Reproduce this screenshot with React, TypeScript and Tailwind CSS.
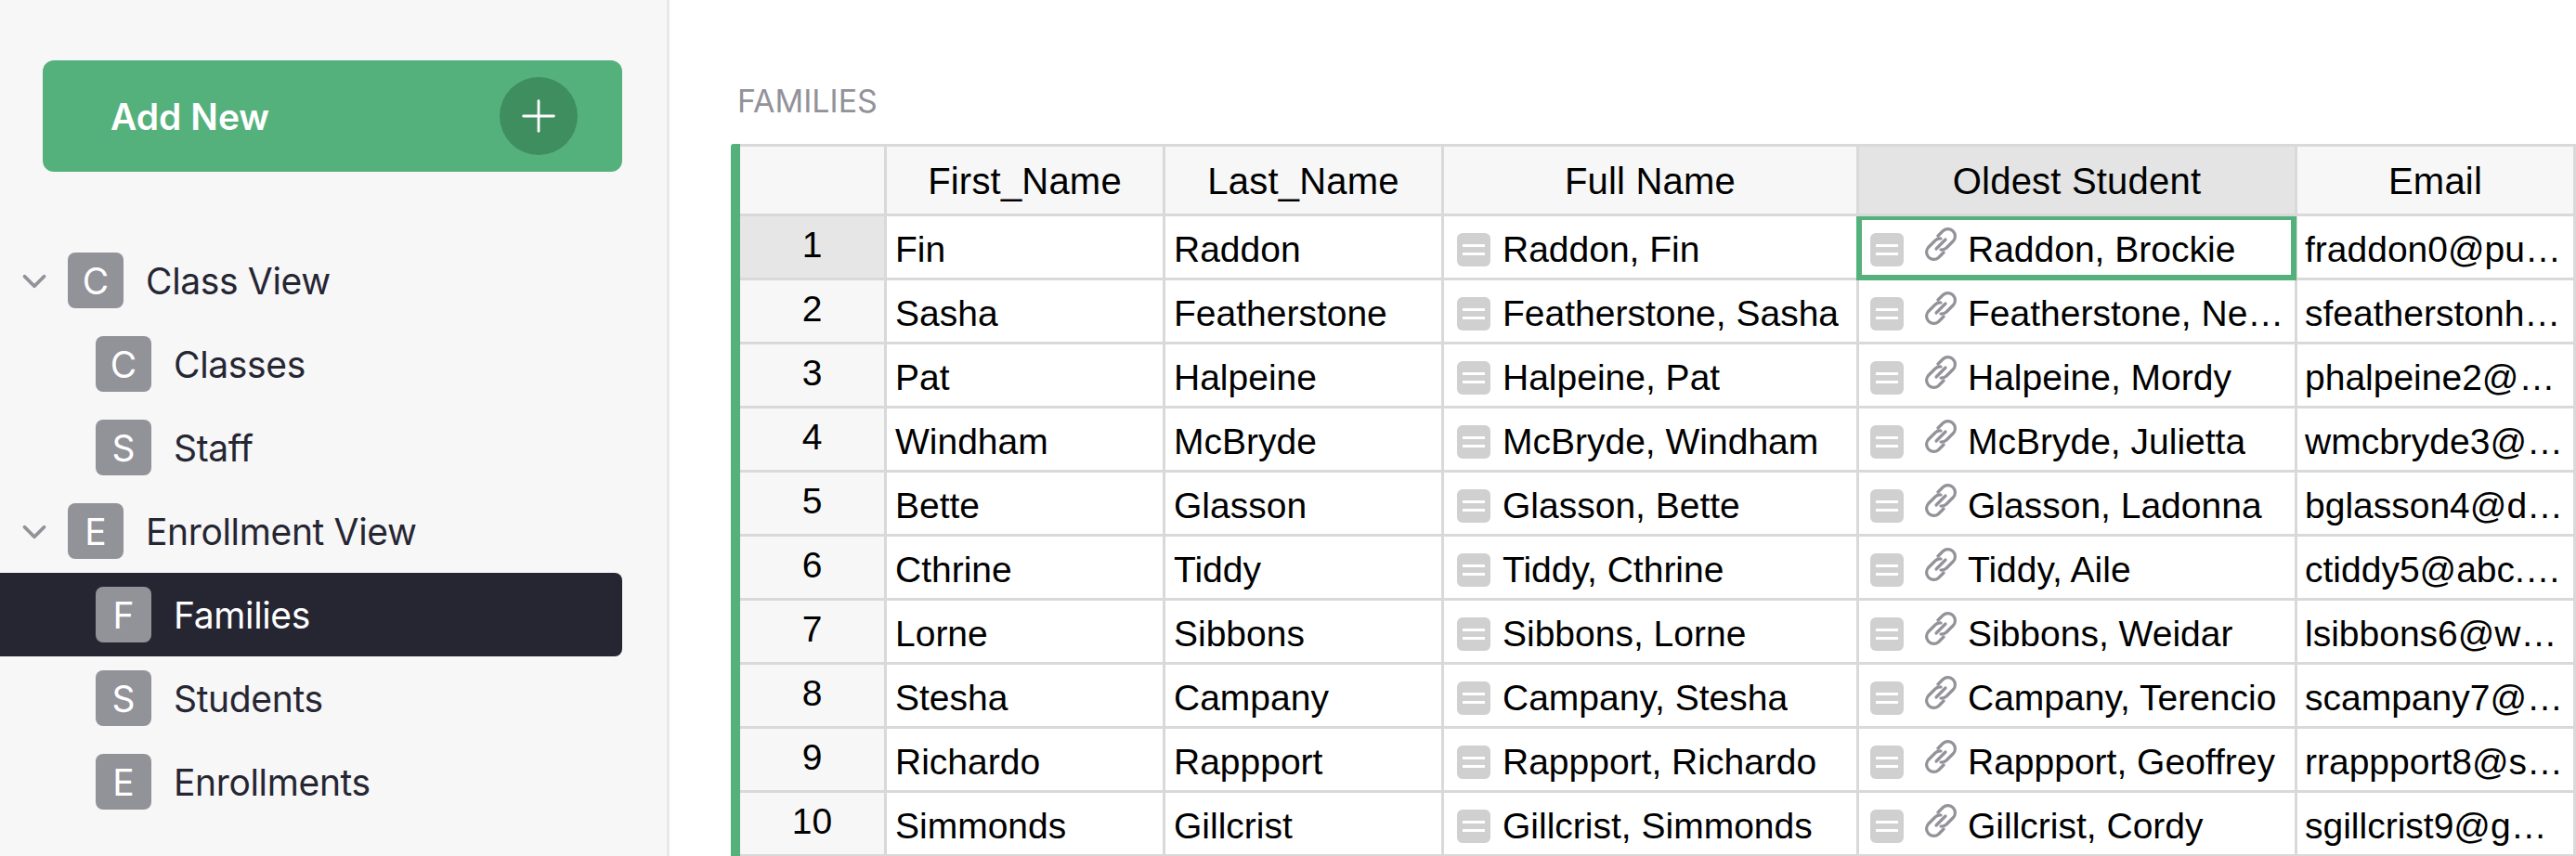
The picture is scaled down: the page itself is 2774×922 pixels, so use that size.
import { ChevronDown, Plus } from "lucide-react"

const rows = [
  ["Fin", "Raddon", "Raddon, Fin", "Raddon, Brockie", "fraddon0@purevolume.com"],
  ["Sasha", "Featherstone", "Featherstone, Sasha", "Featherstone, Nealon", "sfeatherstonh1@example.com"],
  ["Pat", "Halpeine", "Halpeine, Pat", "Halpeine, Mordy", "phalpeine2@example.com"],
  ["Windham", "McBryde", "McBryde, Windham", "McBryde, Julietta", "wmcbryde3@example.com"],
  ["Bette", "Glasson", "Glasson, Bette", "Glasson, Ladonna", "bglasson4@domain.com"],
  ["Cthrine", "Tiddy", "Tiddy, Cthrine", "Tiddy, Aile", "ctiddy5@abc.net.au"],
  ["Lorne", "Sibbons", "Sibbons, Lorne", "Sibbons, Weidar", "lsibbons6@webs.com"],
  ["Stesha", "Campany", "Campany, Stesha", "Campany, Terencio", "scampany7@example.com"],
  ["Richardo", "Rappport", "Rappport, Richardo", "Rappport, Geoffrey", "rrappport8@site.com"],
  ["Simmonds", "Gillcrist", "Gillcrist, Simmonds", "Gillcrist, Cordy", "sgillcrist9@gmail.com"],
]

function PageIcon({ letter }: { letter: string }) {
  return (
    <div className="w-[60px] h-[60px] rounded-[8px] bg-[#929299] text-white flex items-center justify-center shrink-0">
      {letter}
    </div>
  )
}

function TreeItem({ letter, label, group, active }: { letter: string; label: string; group?: boolean; active?: boolean }) {
  return (
    <div className={`h-[90px] flex items-center rounded-r-[8px] ${group ? "pl-[73px]" : "pl-[103px]"} ${active ? "bg-[#262633] text-white" : "text-[#262633]"} relative`}>
      {group && <ChevronDown className="absolute left-[16px] top-[25px] text-[#929299]" size={42} strokeWidth={2.2} />}
      <PageIcon letter={letter} />
      <span className="ml-[24px] tracking-[-0.35px]">{label}</span>
    </div>
  )
}

function FormulaIcon() {
  return (
    <div className="w-[36px] h-[36px] mt-[5px] rounded-[6px] bg-[#d0d0d0] flex flex-col items-center justify-center gap-[6px] shrink-0">
      <div className="w-[24px] h-[3px] bg-white"></div>
      <div className="w-[24px] h-[3px] bg-white"></div>
    </div>
  )
}

function LinkIcon() {
  return (
    <svg className="ml-[22px] -mt-[6px] shrink-0 text-[#929299]" width="36" height="36" viewBox="0 0 36 36" fill="none" stroke="currentColor" strokeWidth="3.2" strokeLinecap="round" strokeLinejoin="round">
      <path d="M15 9 L20.5 3.5 a7.8 7.8 0 0 1 11 11 L24 22 a7.8 7.8 0 0 1 -6 2" />
      <path d="M21 27 L15.5 32.5 a7.8 7.8 0 0 1 -11 -11 L12 14 a7.8 7.8 0 0 1 6 -2" />
      <path d="M13 23 L23 13" />
    </svg>
  )
}

export default function App() {
  return (
    <div className="flex w-[2774px] h-[922px] overflow-hidden bg-white font-['Inter',sans-serif] text-[39px] leading-none">
      {/* Left panel */}
      <div className="w-[721px] h-full shrink-0 bg-[#f7f7f7] border-r-[3px] border-[#e8e8e8] pt-[65px] pr-[48px]">
        <div className="ml-[46px] h-[120px] rounded-[12px] bg-[#55b17c] flex items-center justify-between pl-[73px] pr-[48px] text-white font-semibold">
          <span>Add New</span>
          <div className="w-[84px] h-[84px] rounded-full bg-[#3e8e5f] flex items-center justify-center">
            <Plus size={56} strokeWidth={1.2} />
          </div>
        </div>
        <div className="mt-[72px]">
          <TreeItem letter="C" label="Class View" group />
          <TreeItem letter="C" label="Classes" />
          <TreeItem letter="S" label="Staff" />
          <TreeItem letter="E" label="Enrollment View" group />
          <TreeItem letter="F" label="Families" active />
          <TreeItem letter="S" label="Students" />
          <TreeItem letter="E" label="Enrollments" />
        </div>
      </div>

      {/* Table section */}
      <div className="flex-1 min-w-0 pl-[66px]">
        <div className="h-[155px] pt-[92px] pl-[7px] text-[34px] text-[#929299]">FAMILIES</div>
        <div className="border-l-[10px] border-[#55b17c] rounded-tl-[3px] font-['Liberation_Sans',sans-serif] text-black leading-[46px]">
          <div className="grid grid-cols-[158px_300px_300px_447px_472px_300px] grid-rows-[75px] auto-rows-[69px] border-t-[3px] border-[#d9d9d9]">
            <div className="bg-[#f7f7f7] border-r-[3px] border-b-[3px] border-[#d9d9d9]"></div>
            <div className="bg-[#f7f7f7] border-r-[3px] border-b-[3px] border-[#d9d9d9] flex items-center justify-center pt-[2px] text-[40px] tracking-[0.2px]">First_Name</div>
            <div className="bg-[#f7f7f7] border-r-[3px] border-b-[3px] border-[#d9d9d9] flex items-center justify-center pt-[2px] text-[40px] tracking-[0.2px]">Last_Name</div>
            <div className="bg-[#f7f7f7] border-r-[3px] border-b-[3px] border-[#d9d9d9] flex items-center justify-center pt-[2px] text-[40px] tracking-[0.2px]">Full Name</div>
            <div className="bg-[#e4e4e4] border-r-[3px] border-b-[3px] border-[#d9d9d9] flex items-center justify-center pt-[2px] text-[40px] tracking-[0.2px]">Oldest Student</div>
            <div className="bg-[#f7f7f7] border-r-[3px] border-b-[3px] border-[#d9d9d9] flex items-center justify-center pt-[2px] text-[40px] tracking-[0.2px]">Email</div>

            {rows.map((r, i) => (
              <div key={i} className="contents">
                <div className={`${i === 0 ? "bg-[#e6e6e6]" : "bg-[#f7f7f7]"} border-r-[3px] border-b-[3px] border-[#d9d9d9] flex items-center justify-center pb-[5px]`}>
                  {i + 1}
                </div>
                <div className="border-r-[3px] border-b-[3px] border-[#d9d9d9] flex items-center pl-[9px] pt-[5px]">{r[0]}</div>
                <div className="border-r-[3px] border-b-[3px] border-[#d9d9d9] flex items-center pl-[9px] pt-[5px]">{r[1]}</div>
                <div className="border-r-[3px] border-b-[3px] border-[#d9d9d9] flex items-center pl-[14px]">
                  <FormulaIcon />
                  <span className="ml-[13px] truncate pt-[5px]">{r[2]}</span>
                </div>
                <div className="relative border-r-[3px] border-b-[3px] border-[#d9d9d9] flex items-center pl-[12px] pr-[6px]">
                  {i === 0 && <div className="absolute -left-[3px] top-0 -right-[2px] -bottom-[3px] border-x-[6px] border-t-[4px] border-b-[6px] border-[#55b17c]"></div>}
                  <FormulaIcon />
                  <LinkIcon />
                  <span className="ml-[11px] truncate pt-[5px]">{r[3]}</span>
                </div>
                <div className="border-r-[3px] border-b-[3px] border-[#d9d9d9] flex items-center pl-[8px] pr-[9px] min-w-0">
                  <span className="truncate pt-[5px]">{r[4]}</span>
                </div>
              </div>
            ))}
          </div>
        </div>
      </div>
    </div>
  )
}
